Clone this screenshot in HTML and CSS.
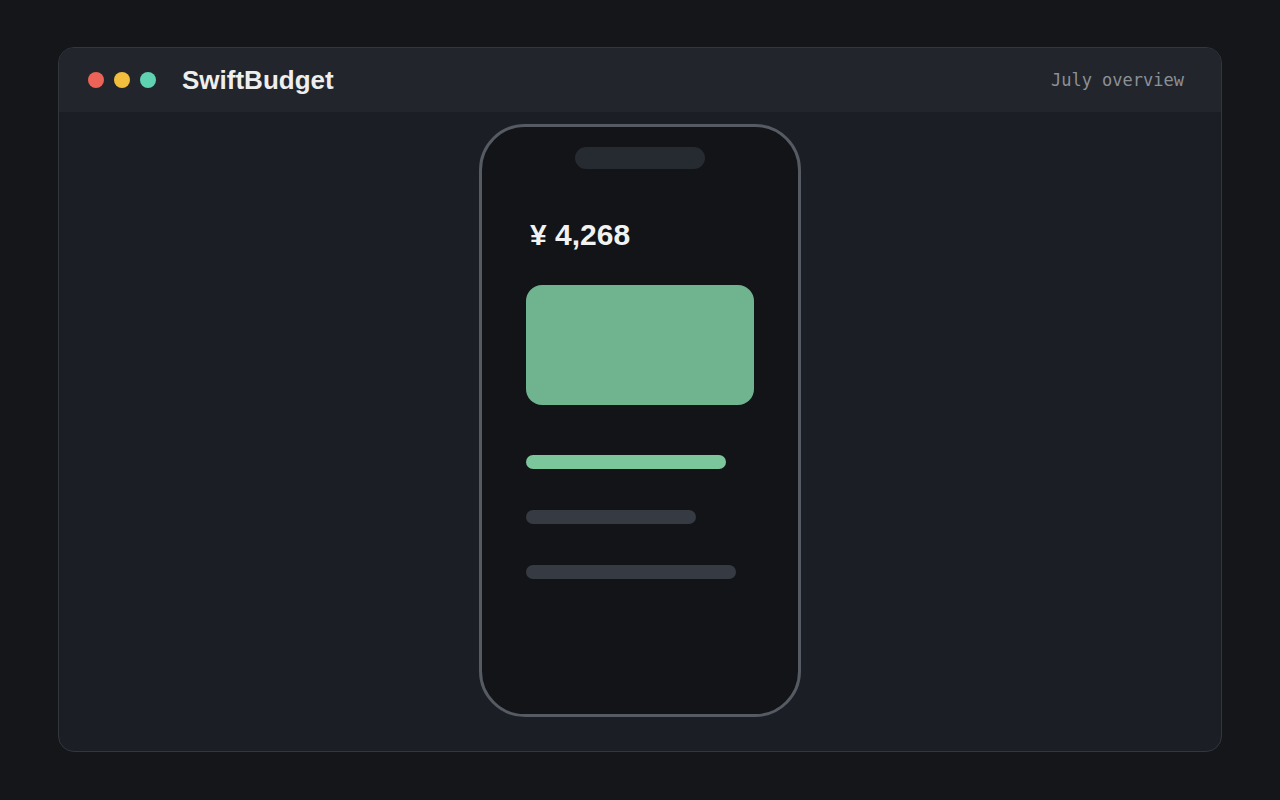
FILE: index.html
```html
<!DOCTYPE html>
<html>
  <head>
    <link rel="stylesheet" href="styles.css">
  </head>
  <body>
    <div class="window">
      <div class="titlebar">
        <div class="dots">
          <span class="dot red"></span>
          <span class="dot yellow"></span>
          <span class="dot green"></span>
        </div>
        <h1 class="app-name">SwiftBudget</h1>
        <span class="period">July overview</span>
      </div>

      <div class="stage">
        <div class="phone">
          <div class="notch"></div>
          <div class="amount">¥ 4,268</div>
          <div class="card"></div>
          <div class="bars">
            <div class="bar accent" style="width: 200px"></div>
            <div class="bar" style="width: 170px"></div>
            <div class="bar" style="width: 210px"></div>
          </div>
        </div>
      </div>
    </div>
  </body>
</html>
```

FILE: styles.css
```css
html,
body {
  height: 100%;
}
body {
  margin: 0;
  padding: 47px 58px 48px;
  box-sizing: border-box;
  background-color: #141619;
  font-family: "Liberation Sans", Arial, sans-serif;
  color: #eeeeee;
}
.window {
  height: 100%;
  box-sizing: border-box;
  display: flex;
  flex-direction: column;
  border: 1px solid #33373d;
  border-radius: 16px;
  background-color: #1b1e24;
  overflow: hidden;
}
.titlebar {
  height: 64px;
  flex-shrink: 0;
  display: flex;
  align-items: center;
  padding: 0 37px 0 29px;
  background-color: #22252b;
}
.dots {
  display: flex;
  gap: 10px;
}
.dot {
  width: 16px;
  height: 16px;
  border-radius: 50%;
}
.red {
  background-color: #ec6357;
}
.yellow {
  background-color: #f2be3d;
}
.green {
  background-color: #5fd3b1;
}
.app-name {
  margin: 0 0 0 26px;
  font-size: 26px;
  font-weight: bold;
  color: #eeeeee;
}
.period {
  margin-left: auto;
  font-family: "DejaVu Sans Mono", "Liberation Mono", monospace;
  font-size: 17px;
  color: #8b9097;
}
.stage {
  flex: 1;
  display: flex;
  justify-content: center;
  padding-top: 12px;
}
.phone {
  width: 322px;
  height: 593px;
  box-sizing: border-box;
  border: 3px solid #555a63;
  border-radius: 46px;
  background-color: #121417;
  padding: 20px 44px 0;
  display: flex;
  flex-direction: column;
}
.notch {
  align-self: center;
  width: 130px;
  height: 22px;
  border-radius: 11px;
  background-color: #262a31;
}
.amount {
  margin-top: 49px;
  padding-left: 4px;
  font-size: 30px;
  line-height: 34px;
  font-weight: bold;
  color: #f2f2f2;
}
.card {
  margin-top: 33px;
  height: 120px;
  border-radius: 16px;
  background-color: #6fb38f;
}
.bars {
  margin-top: 50px;
  display: flex;
  flex-direction: column;
  gap: 41px;
}
.bar {
  height: 14px;
  border-radius: 7px;
  background-color: #363a42;
}
.bar.accent {
  background-color: #7cc69c;
}
```
